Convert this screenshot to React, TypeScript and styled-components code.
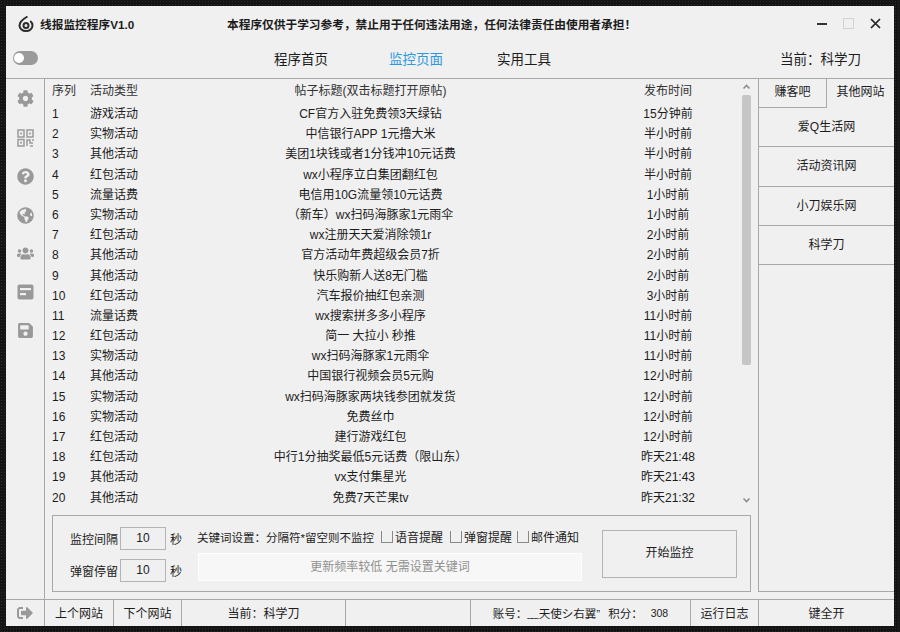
import styled, { createGlobalStyle } from 'styled-components'
import { FaCog, FaQuestionCircle, FaGlobeAmericas, FaUsers, FaSave, FaSignOutAlt } from 'react-icons/fa'

const ROWS = [
  ['游戏活动', 'CF官方入驻免费领3天绿钻', '15分钟前'],
  ['实物活动', '中信银行APP 1元撸大米', '半小时前'],
  ['其他活动', '美团1块钱或者1分钱冲10元话费', '半小时前'],
  ['红包活动', 'wx小程序立白集团翻红包', '半小时前'],
  ['流量话费', '电信用10G流量领10元话费', '1小时前'],
  ['实物活动', '（新车）wx扫码海豚家1元雨伞', '1小时前'],
  ['红包活动', 'wx注册天天爱消除领1r', '2小时前'],
  ['其他活动', '官方活动年费超级会员7折', '2小时前'],
  ['其他活动', '快乐购新人送8无门槛', '2小时前'],
  ['红包活动', '汽车报价抽红包亲测', '3小时前'],
  ['流量话费', 'wx搜索拼多多小程序', '11小时前'],
  ['红包活动', '简一 大拉小 秒推', '11小时前'],
  ['实物活动', 'wx扫码海豚家1元雨伞', '11小时前'],
  ['其他活动', '中国银行视频会员5元购', '12小时前'],
  ['实物活动', 'wx扫码海豚家两块钱参团就发货', '12小时前'],
  ['实物活动', '免费丝巾', '12小时前'],
  ['红包活动', '建行游戏红包', '12小时前'],
  ['红包活动', '中行1分抽奖最低5元话费（限山东）', '昨天21:48'],
  ['其他活动', 'vx支付集星光', '昨天21:43'],
  ['其他活动', '免费7天芒果tv', '昨天21:32'],
]

const LINE = '#a8a8a8'

const GlobalStyle = createGlobalStyle`
  html, body { margin: 0; padding: 0; }
  body {
    font-family: "Liberation Sans", "Noto Sans CJK SC", sans-serif;
    font-size: 12px;
    color: #1c1c1c;
  }
`

const Desktop = styled.div`
  width: 900px;
  height: 632px;
  box-sizing: border-box;
  padding: 6px;
  background-color: #141414;
  background-image: radial-gradient(#2b2b2b 1px, transparent 1px);
  background-size: 3px 3px;
`
const Window = styled.div`
  height: 620px;
  display: flex;
  flex-direction: column;
  background: #f0f0f0;
`
const TitleBar = styled.div`
  height: 35px;
  flex: none;
  display: grid;
  grid-template-columns: 215px 416px 1fr;
  align-items: center;
`
const Brand = styled.div`
  display: flex;
  align-items: center;
  gap: 6px;
  padding-left: 12px;
  font-weight: 700;
  font-size: 11.7px;
`
const Notice = styled.div`
  font-weight: 700;
  font-size: 11.7px;
  padding-left: 6px;
  white-space: nowrap;
`
const WinButtons = styled.div`
  display: flex;
  justify-content: flex-end;
  align-items: center;
  gap: 16px;
  padding-right: 13px;
`
const NavBar = styled.div`
  height: 38px;
  flex: none;
  box-sizing: border-box;
  border-bottom: 1px solid ${LINE};
  display: flex;
  align-items: center;
  font-size: 13.5px;
  padding-bottom: 3px;
`
const Toggle = styled.div`
  width: 25px;
  height: 14px;
  margin-left: 7px;
  border-radius: 7px;
  background: #9a9a9a;
  position: relative;
  &::before {
    content: '';
    position: absolute;
    left: 1px;
    top: 2px;
    width: 10px;
    height: 10px;
    border-radius: 50%;
    background: #fff;
  }
`
const NavItems = styled.div`
  display: flex;
  margin-left: 236px;
`
const NavItem = styled.div<{ $active?: boolean; $gap?: number }>`
  color: ${p => (p.$active ? '#2d9ae0' : '#1c1c1c')};
  margin-right: ${p => p.$gap ?? 0}px;
`
const Current = styled.div`
  margin-left: auto;
  margin-right: 33px;
`
const Body = styled.div`
  flex: 1;
  min-height: 0;
  display: flex;
`
const SideBar = styled.div`
  width: 39px;
  flex: none;
  box-sizing: border-box;
  border-right: 1px solid ${LINE};
  display: flex;
  flex-direction: column;
  align-items: center;
  padding: 11px 0 0 0;
  gap: 21.6px;
  color: #999;
  svg { display: block; }
`
const Main = styled.div`
  flex: 1;
  min-width: 0;
  display: flex;
  flex-direction: column;
`
const ListArea = styled.div`
  flex: 1;
  min-height: 0;
  display: flex;
`
const Table = styled.div`
  width: 697px;
  box-sizing: border-box;
  padding: 1px 0 0 7px;
`
const RowGrid = styled.div<{ $head?: boolean }>`
  display: grid;
  grid-template-columns: 38px 60px 441px 1fr;
  height: ${p => (p.$head ? '24px' : '20.2px')};
  line-height: ${p => (p.$head ? '22px' : '20px')};
  color: ${p => (p.$head ? '#333' : '#1c1c1c')};
`
const Center = styled.div`
  text-align: center;
  white-space: nowrap;
`
const TimeCell = styled(Center)`
  width: 154px;
`
const ScrollBar = styled.div`
  width: 9px;
  display: flex;
  flex-direction: column;
  align-items: center;
  padding: 5px 0 12px;
  box-sizing: border-box;
  svg { flex: none; }
`
const Thumb = styled.div`
  width: 9px;
  height: 270px;
  margin-top: 5px;
  border-radius: 2px;
  background: #c6c6c6;
`
const TrackFill = styled.div`
  flex: 1;
`
const Controls = styled.div`
  height: 77px;
  flex: none;
  box-sizing: border-box;
  margin: 0 7px 7px 7px;
  border: 1px solid ${LINE};
  display: flex;
  align-items: center;
  padding-left: 17px;
`
const Timers = styled.div`
  width: 127px;
  flex: none;
  display: grid;
  gap: 9px;
  padding-top: 1px;
`
const TimerRow = styled.div`
  display: flex;
  align-items: center;
`
const TimerLabel = styled.div`
  width: 50px;
  white-space: nowrap;
`
const TimerBox = styled.div`
  width: 46px;
  height: 23px;
  box-sizing: border-box;
  border: 1px solid #b4b4b4;
  text-align: center;
  line-height: 21px;
  margin-right: 4px;
`
const Keywords = styled.div`
  width: 386px;
  flex: none;
`
const OptionRow = styled.div`
  display: flex;
  align-items: center;
  height: 20px;
  margin-bottom: 6px;
  white-space: nowrap;
`
const Hint = styled.div`
  width: 180px;
  flex: none;
  font-size: 11.5px;
`
const Check = styled.span`
  width: 12px;
  height: 12px;
  box-sizing: border-box;
  flex: none;
  margin: 0 2px 0 4px;
  border: 1px solid #888;
  border-top: none;
`
const CheckText = styled.span<{ $gap: number }>`
  margin-right: ${p => p.$gap}px;
`
const KeywordInput = styled.div`
  width: 384px;
  height: 28px;
  box-sizing: border-box;
  margin-left: 1px;
  background: #f7f7f7;
  border: 1px solid #fdfdfd;
  color: #909090;
  text-align: center;
  line-height: 26px;
`
const StartButton = styled.div`
  width: 135px;
  height: 48px;
  flex: none;
  box-sizing: border-box;
  margin-left: 19px;
  border: 1px solid #b4b4b4;
  text-align: center;
  line-height: 44px;
`
const RightPanel = styled.div`
  width: 136px;
  flex: none;
  box-sizing: border-box;
  margin-bottom: 7px;
  border-left: 1px solid ${LINE};
  border-bottom: 1px solid ${LINE};
`
const Tabs = styled.div`
  display: flex;
  height: 29px;
`
const Tab = styled.div<{ $active?: boolean }>`
  flex: 1;
  text-align: center;
  line-height: 27px;
  box-sizing: border-box;
  white-space: nowrap;
  border-bottom: ${p => (p.$active ? 'none' : `1px solid ${LINE}`)};
  border-right: ${p => (p.$active ? 'none' : `1px solid ${LINE}`)};
`
const SiteLink = styled.div`
  height: 39.3px;
  box-sizing: border-box;
  border-bottom: 1px solid ${LINE};
  text-align: center;
  line-height: 38px;
`
const StatusBar = styled.div`
  height: 27px;
  flex: none;
  box-sizing: border-box;
  border-top: 1px solid ${LINE};
  display: flex;
`
const StatusCell = styled.div<{ $w: number }>`
  width: ${p => p.$w}px;
  flex: none;
  box-sizing: border-box;
  border-right: 1px solid ${LINE};
  padding-bottom: 1px;
  display: flex;
  align-items: center;
  justify-content: center;
  white-space: nowrap;
  color: #999;
  span { color: #1c1c1c; }
`
const LastCell = styled(StatusCell)`
  border-right: none;
`
const Account = styled.span`
  font-size: 11.5px;
`
const Points = styled(Account)`
  margin-left: 8px;
`
const Score = styled.span`
  font-size: 10.5px;
  margin-left: 8px;
`

const Logo = () => (
  <svg width="16" height="17" viewBox="0 0 16 17" fill="none" stroke="#2b2b2b" strokeWidth="2">
    <path d="M9.5 1.5 C5 4 1.5 7 1.5 10.5 a6.5 5.5 0 0 0 13 0 C14.5 8.5 13.5 7 12.2 6" />
    <circle cx="8" cy="10.5" r="2.5" />
  </svg>
)

const QrIcon = () => (
  <svg width="17" height="18" viewBox="0 0 17 18" fill="none" stroke="#9a9a9a" strokeWidth="1.5">
    <rect x="1" y="1" width="6" height="7" />
    <rect x="10" y="1" width="6" height="7" />
    <rect x="1" y="10.5" width="6" height="6.5" />
    <path d="M10 17v-6h3v3h3M16 10v2M13 17h3" />
    <rect x="3.2" y="3.5" width="1.6" height="2" fill="#9a9a9a" stroke="none" />
    <rect x="12.2" y="3.5" width="1.6" height="2" fill="#9a9a9a" stroke="none" />
    <rect x="3.2" y="12.7" width="1.6" height="2" fill="#9a9a9a" stroke="none" />
  </svg>
)

const CardIcon = () => (
  <svg width="17" height="16" viewBox="0 0 17 16">
    <rect width="16" height="15" x="0.5" y="0.5" rx="2" fill="#999" />
    <rect x="3" y="4" width="11" height="2.2" fill="#f0f0f0" />
    <rect x="3" y="9" width="6" height="2.2" fill="#f0f0f0" />
  </svg>
)

const Chevron = ({ down }: { down?: boolean }) => (
  <svg width="9" height="6" viewBox="0 0 9 6" fill="none" stroke="#8e8e8e" strokeWidth="1.6">
    <path d={down ? 'M1.5 1.5 4.5 4.5 7.5 1.5' : 'M1.5 4.5 4.5 1.5 7.5 4.5'} />
  </svg>
)

const App = () => {
  return (
    <Desktop>
      <GlobalStyle />
      <Window>
        <TitleBar>
          <Brand>
            <Logo />
            线报监控程序V1.0
          </Brand>
          <Notice>本程序仅供于学习参考，禁止用于任何违法用途，任何法律责任由使用者承担！</Notice>
          <WinButtons>
            <svg width="10" height="10" viewBox="0 0 10 10"><rect y="4" width="10" height="2" fill="#333" /></svg>
            <svg width="11" height="11" viewBox="0 0 11 11" fill="none" stroke="#d2d2d2"><rect x="0.5" y="0.5" width="10" height="10" /></svg>
            <svg width="11" height="11" viewBox="0 0 11 11" stroke="#222" strokeWidth="1.7"><path d="M1 1 10 10M10 1 1 10" /></svg>
          </WinButtons>
        </TitleBar>
        <NavBar>
          <Toggle />
          <NavItems>
            <NavItem $gap={61}>程序首页</NavItem>
            <NavItem $active $gap={54}>监控页面</NavItem>
            <NavItem>实用工具</NavItem>
          </NavItems>
          <Current>当前：科学刀</Current>
        </NavBar>
        <Body>
          <SideBar>
            <FaCog size={17} />
            <QrIcon />
            <FaQuestionCircle size={17} />
            <FaGlobeAmericas size={17} />
            <FaUsers size={17} />
            <CardIcon />
            <FaSave size={17} />
          </SideBar>
          <Main>
            <ListArea>
              <Table>
                <RowGrid $head>
                  <div>序列</div>
                  <div>活动类型</div>
                  <Center>帖子标题(双击标题打开原帖)</Center>
                  <TimeCell>发布时间</TimeCell>
                </RowGrid>
                {ROWS.map((row, i) => (
                  <RowGrid key={i}>
                    <div>{i + 1}</div>
                    <div>{row[0]}</div>
                    <Center>{row[1]}</Center>
                    <TimeCell>{row[2]}</TimeCell>
                  </RowGrid>
                ))}
              </Table>
              <ScrollBar>
                <Chevron />
                <Thumb />
                <TrackFill />
                <Chevron down />
              </ScrollBar>
            </ListArea>
            <Controls>
              <Timers>
                <TimerRow>
                  <TimerLabel>监控间隔</TimerLabel>
                  <TimerBox>10</TimerBox>
                  秒
                </TimerRow>
                <TimerRow>
                  <TimerLabel>弹窗停留</TimerLabel>
                  <TimerBox>10</TimerBox>
                  秒
                </TimerRow>
              </Timers>
              <Keywords>
                <OptionRow>
                  <Hint>关键词设置：分隔符*留空则不监控</Hint>
                  <Check />
                  <CheckText $gap={3}>语音提醒</CheckText>
                  <Check />
                  <CheckText $gap={1}>弹窗提醒</CheckText>
                  <Check />
                  <CheckText $gap={0}>邮件通知</CheckText>
                </OptionRow>
                <KeywordInput>更新频率较低 无需设置关键词</KeywordInput>
              </Keywords>
              <StartButton>开始监控</StartButton>
            </Controls>
          </Main>
          <RightPanel>
            <Tabs>
              <Tab>赚客吧</Tab>
              <Tab $active>其他网站</Tab>
            </Tabs>
            <SiteLink>爱Q生活网</SiteLink>
            <SiteLink>活动资讯网</SiteLink>
            <SiteLink>小刀娱乐网</SiteLink>
            <SiteLink>科学刀</SiteLink>
          </RightPanel>
        </Body>
        <StatusBar>
          <StatusCell $w={39}><FaSignOutAlt size={16} /></StatusCell>
          <StatusCell $w={69}><span>上个网站</span></StatusCell>
          <StatusCell $w={68}><span>下个网站</span></StatusCell>
          <StatusCell $w={164}><span>当前：科学刀</span></StatusCell>
          <StatusCell $w={125} />
          <StatusCell $w={220}>
            <Account>账号：﹏天使シ右翼”</Account>
            <Points>积分：</Points>
            <Score>308</Score>
          </StatusCell>
          <StatusCell $w={68}><span>运行日志</span></StatusCell>
          <LastCell $w={135}><span>键全开</span></LastCell>
        </StatusBar>
      </Window>
    </Desktop>
  )
}

export default App
